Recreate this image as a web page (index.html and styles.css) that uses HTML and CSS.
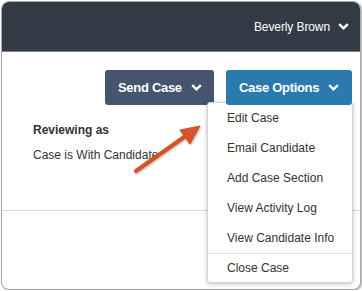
FILE: index.html
```html
<!DOCTYPE html>
<html lang="en">
<head>
    <meta charset="utf-8">
    <title>Case</title>
    <meta name="viewport" content="width=device-width, initial-scale=1.0">
    <link rel="stylesheet" href="styles.css">
</head>
<body>
    <div class="window">
        <header class="topbar">
            <span class="user">Beverly Brown</span>
            <svg class="chev" width="11" height="7" viewBox="0 0 11 7"><path d="M1.2 1.2 L5.5 5.3 L9.8 1.2" fill="none" stroke="#fff" stroke-width="2.4"/></svg>
        </header>

        <main class="case">
            <div class="actions">
                <button class="btn btn-send">Send Case
                    <svg class="chev" width="11" height="7" viewBox="0 0 11 7"><path d="M1.2 1.2 L5.5 5.3 L9.8 1.2" fill="none" stroke="#fff" stroke-width="2.4"/></svg>
                </button>
                <div class="options">
                    <button class="btn btn-options">Case Options
                        <svg class="chev" width="11" height="7" viewBox="0 0 11 7"><path d="M1.2 1.2 L5.5 5.3 L9.8 1.2" fill="none" stroke="#fff" stroke-width="2.4"/></svg>
                    </button>
                    <ul class="menu">
                        <li>Edit Case</li>
                        <li>Email Candidate</li>
                        <li>Add Case Section</li>
                        <li>View Activity Log</li>
                        <li>View Candidate Info</li>
                        <li class="divided">Close Case</li>
                    </ul>
                </div>
            </div>

            <div class="status">
                <p class="label">Reviewing as</p>
                <p>Case is With Candidate</p>
            </div>
            <div class="rule"></div>
        </main>

        <!-- annotation arrow -->
        <svg class="callout" width="362" height="291" viewBox="0 0 362 291">
            <defs>
                <filter id="sh" x="-20%" y="-20%" width="140%" height="140%">
                    <feDropShadow dx="0.5" dy="1" stdDeviation="0.8" flood-color="#000" flood-opacity="0.35"/>
                </filter>
            </defs>
            <g filter="url(#sh)" fill="#d6532a" stroke="#d6532a">
                <line x1="136" y1="171" x2="187" y2="135" stroke-width="4" stroke-linecap="round"/>
                <polygon points="200,126 180,130 190,144" stroke-width="1" stroke-linejoin="round"/>
            </g>
        </svg>
    </div>
</body>
</html>
```

FILE: styles.css
```css
html, body {
    margin: 0;
    padding: 0;
    background: #fff;
    font-family: "Liberation Sans", Arial, sans-serif;
}

.window {
    position: relative;
    box-sizing: border-box;
    margin: 1px 0 0 1px;
    width: 360px;
    height: 289px;
    border: 1px solid #a9a9a9;
    border-radius: 8px;
    overflow: hidden;
    background: #fff;
    box-shadow: 1px 1px 2px rgba(0, 0, 0, 0.3);
}

.topbar {
    height: 49px;
    background-color: #323a46;
    border-bottom: 1px solid #7d838c;
    display: flex;
    justify-content: flex-end;
    align-items: center;
    gap: 8px;
    padding-right: 11px;
}

.user {
    color: #fff;
    font-size: 12px;
    letter-spacing: -0.1px;
}

.chev {
    display: block;
}

.actions {
    display: flex;
    justify-content: flex-end;
    gap: 12px;
    margin-top: 18px;
    padding-right: 8px;
}

.btn {
    height: 35px;
    display: flex;
    align-items: center;
    gap: 9px;
    padding: 0 11px 0 13px;
    border: none;
    border-radius: 3px;
    color: #fff;
    font-family: "Liberation Sans", Arial, sans-serif;
    font-size: 13px;
    font-weight: bold;
    letter-spacing: -0.3px;
    cursor: pointer;
}

.btn-send {
    width: 109px;
    background-color: #45546f;
}

.btn-options {
    width: 126px;
    background-color: #2a7aae;
    position: relative;
    z-index: 2;
}

.options {
    position: relative;
}

.menu {
    position: absolute;
    top: 32px;
    right: -1px;
    width: 146px;
    margin: 0;
    padding: 0;
    list-style: none;
    background: #fff;
    border: 1px solid #d4d4d4;
    border-radius: 3px;
    box-sizing: border-box;
    box-shadow: 0 1px 4px rgba(0, 0, 0, 0.25);
    z-index: 1;
}

.menu li {
    height: 30px;
    line-height: 30px;
    padding-left: 19px;
    font-size: 12px;
    color: #333;
}

.menu li.divided {
    border-top: 1px solid #e3e3e3;
    height: 28px;
    line-height: 28px;
}

.status {
    padding-left: 31px;
    font-size: 12px;
    color: #333;
}

.status p {
    margin: 0;
    line-height: 16px;
}

.status .label {
    margin-top: 17px;
    margin-bottom: 9px;
    font-weight: bold;
}

.rule {
    margin-top: 47px;
    border-top: 1px solid #d9d9d9;
}

.callout {
    position: absolute;
    left: -2px;
    top: -2px;
    pointer-events: none;
}
```
